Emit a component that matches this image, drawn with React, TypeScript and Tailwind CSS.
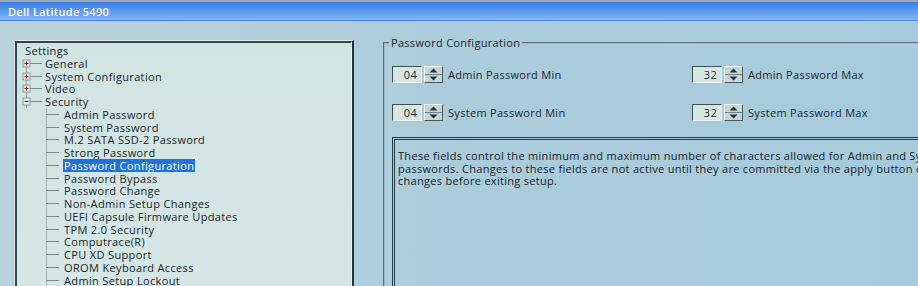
import React from "react";

const font = { fontFamily: '"Open Sans", "Liberation Sans", sans-serif' };

const topItems = [
  { id: 1, text: "General", open: false },
  { id: 2, text: "System Configuration", open: false },
  { id: 3, text: "Video", open: false },
  { id: 4, text: "Security", open: true },
];

const securityItems = [
  "Admin Password",
  "System Password",
  "M.2 SATA SSD-2 Password",
  "Strong Password",
  "Password Configuration",
  "Password Bypass",
  "Password Change",
  "Non-Admin Setup Changes",
  "UEFI Capsule Firmware Updates",
  "TPM 2.0 Security",
  "Computrace(R)",
  "CPU XD Support",
  "OROM Keyboard Access",
  "Admin Setup Lockout",
];

const TopBranch = ({ open, first }: { open: boolean; first: boolean }) => (
  <svg width="25" height="13" viewBox="0 0 25 13" className="shrink-0">
    <line x1="6.5" y1={first ? 3 : 0} x2="6.5" y2="13" stroke="#8a9c9c" strokeWidth="1" />
    <line x1="10" y1="6.5" x2="22" y2="6.5" stroke="#7a8c8c" strokeWidth="1" />
    <rect x="3" y="3" width="7" height="7" fill="#e4eeee" stroke="#8a9a9a" strokeWidth="1" />
    <line x1="4.5" y1="6.5" x2="8.5" y2="6.5" stroke="#7a1f1f" strokeWidth="1" />
    {!open && <line x1="6.5" y1="4.5" x2="6.5" y2="8.5" stroke="#7a1f1f" strokeWidth="1" />}
  </svg>
);

const ChildBranch = () => (
  <svg width="44" height="13" viewBox="0 0 44 13" className="shrink-0">
    <line x1="27.5" y1="0" x2="27.5" y2="13" stroke="#a2b2b2" strokeWidth="1" />
    <line x1="27" y1="6.5" x2="40" y2="6.5" stroke="#7a8c8c" strokeWidth="1" />
  </svg>
);

const Spinner = ({ value, label }: { value: string; label: string }) => (
  <div className="flex items-center h-[17px]">
    <div className="w-[30px] h-[17px] border-t border-l border-t-[#3a5254] border-l-[#3a5254] border-b border-r border-b-[#eef5f5] border-r-[#eef5f5] bg-[#d6e7e3] flex items-center justify-end pr-[4px] text-[11px] tracking-[0.3px] text-[#1d2e33] leading-none">
      {value}
    </div>
    <div className="ml-[2px] w-[19px] h-[17px] flex flex-col border border-t-[#f2f7f7] border-l-[#f2f7f7] border-b-[#43595c] border-r-[#43595c] bg-[#c7d5d6]">
      <div className="flex-1 flex items-center justify-center border-b border-[#6f8588]">
        <svg width="9" height="5" viewBox="0 0 9 5">
          <path d="M0.5 4.5 L4.5 0.5 L8.5 4.5 Z" fill="#22353a" />
        </svg>
      </div>
      <div className="flex-1 flex items-center justify-center">
        <svg width="9" height="5" viewBox="0 0 9 5">
          <path d="M0.5 0.5 L4.5 4.5 L8.5 0.5 Z" fill="#22353a" />
        </svg>
      </div>
    </div>
    <span className="ml-[5px] text-[11px] tracking-[0.3px] leading-none text-[#18282d] whitespace-nowrap">{label}</span>
  </div>
);

export default function App() {
  return (
    <div className="w-[918px] h-[286px] overflow-hidden flex flex-col bg-gradient-to-r from-[#b9d3da] via-[#acccdb] to-[#a6cbdc]" style={font}>
      {/* title bar */}
      <div className="h-[2px] bg-[#9aa8b6] shrink-0" />
      <div className="h-[19px] shrink-0 flex items-center pl-[8px] bg-gradient-to-b from-[#3c7ee9] via-[#5a98f0] to-[#86b6f3] border-b border-[#4a86e6]">
        <span className="text-white text-[11px] font-semibold tracking-[0.3px] leading-none">Dell Latitude 5490</span>
      </div>

      <div className="flex flex-1 min-h-0">
        {/* settings tree */}
        <div className="pl-[14px] pt-[19px] shrink-0">
          <div className="w-[340px] h-[300px] border-l border-t border-r-2 border-l-[#e2ecec] border-t-[#e2ecec] border-r-[#203538]">
            <div className="h-full border-l-2 border-t-2 border-r border-l-[#30484c] border-t-[#30484c] border-r-[#e8f0f0] bg-gradient-to-b from-[#d0e4e2] to-[#d6e7e6] pt-[1px] text-[11px] tracking-[0.35px] text-[#17262b] leading-none">
              <div className="h-[13px] flex items-center pl-[8px]">Settings</div>
              {topItems.map((item, i) => (
                <div key={item.id} className="h-[12.75px] flex items-center pl-[3px] whitespace-nowrap">
                  <TopBranch open={item.open} first={i === 0} />
                  <span>{item.text}</span>
                </div>
              ))}
              {securityItems.map((text) => {
                const selected = text === "Password Configuration";
                return (
                  <div key={text} className="h-[12.75px] flex items-center pl-[2px] whitespace-nowrap">
                    <ChildBranch />
                    <span className={selected ? "bg-[#1f74dc] text-white px-[1px] py-[1px]" : "px-[1px]"}>{text}</span>
                  </div>
                );
              })}
            </div>
          </div>
        </div>

        {/* password configuration */}
        <div className="pl-[29px] pt-[16px] shrink-0">
          <fieldset className="w-[620px] h-[300px] border-2 [border-style:groove] border-[#9cbccb] pt-[18px]">
            <legend className="px-[2px] ml-[4px] text-[11px] tracking-[0.3px] text-[#17262b] leading-none">Password Configuration</legend>
            <div className="pl-[7px]">
              <div className="grid grid-cols-[300px_300px] gap-y-[21px]">
                <Spinner value="04" label="Admin Password Min" />
                <Spinner value="32" label="Admin Password Max" />
                <Spinner value="04" label="System Password Min" />
                <Spinner value="32" label="System Password Max" />
              </div>
              <div className="mt-[16px] h-[200px] border-[3px] [border-style:double] border-[#1d3b46] pl-[3px] pt-[10px] text-[11px] tracking-[0.3px] leading-[12.6px] text-[#142329] whitespace-nowrap">
                <div>These fields control the minimum and maximum number of characters allowed for Admin and System</div>
                <div>passwords. Changes to these fields are not active until they are committed via the apply button or saving</div>
                <div>changes before exiting setup.</div>
              </div>
            </div>
          </fieldset>
        </div>
      </div>
    </div>
  );
}
